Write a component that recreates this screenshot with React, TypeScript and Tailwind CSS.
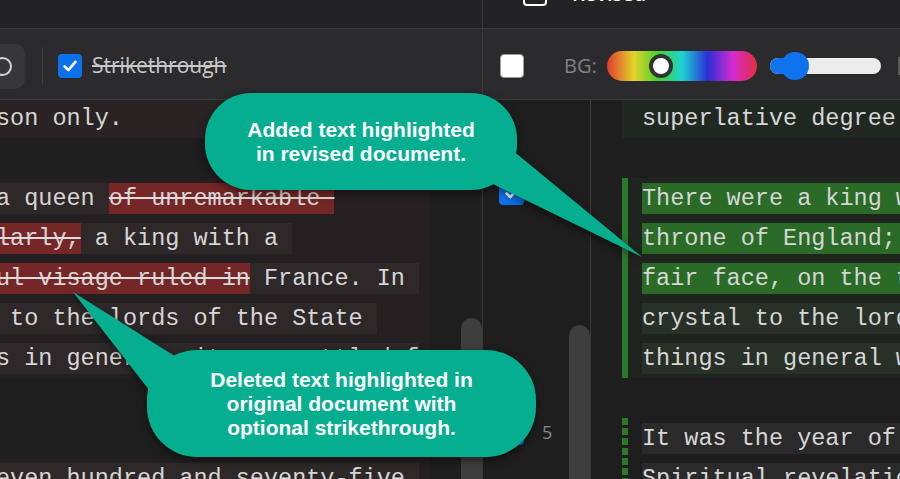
import React from "react";

type Seg = { t: string; c?: string };

const mono = "font-['Liberation_Mono',monospace] text-[23.5px] text-[#d6d6d6]";
const ui = "font-['Open_Sans','Noto_Sans',sans-serif]";

const del = "bg-[#752626] line-through decoration-[#dcdcdc] decoration-2";
const plain = "bg-[#2e2829]";

// left (original) rows
const leftRows: { bg: string; segs: Seg[] }[] = [
  { bg: "bg-[#2a2324]", segs: [{ t: "son only." }] },
  { bg: "", segs: [] },
  { bg: "bg-[#241f20]", segs: [{ t: "a queen ", c: plain }, { t: "of unremarkable ", c: del }] },
  { bg: "bg-[#241f20]", segs: [{ t: "larly,", c: del }, { t: " a king with a ", c: plain }] },
  { bg: "bg-[#241f20]", segs: [{ t: "ul visage ruled in", c: del }, { t: " France. In ", c: plain }] },
  { bg: "bg-[#241f20]", segs: [{ t: " to the lords of the State ", c: plain }] },
  { bg: "bg-[#241f20]", segs: [{ t: "s in general, it was settled f", c: plain }] },
  { bg: "", segs: [] },
  { bg: "", segs: [] },
  { bg: "bg-[#241f20]", segs: [{ t: "even hundred and seventy-five ", c: plain }] },
];

const add = "bg-[#296b27]";
const soft = "bg-[#283028]";
const gray = "bg-[#2a2a2a]";
const solidBar = "bg-[#2b7a2b]";
const dashBar =
  "bg-[repeating-linear-gradient(to_bottom,#2b7a2b_0px,#2b7a2b_7px,transparent_7px,transparent_10px)]";

// right (revised) rows
const rightRows: { bar: string; para: string; segs: Seg[] }[] = [
  { bar: "", para: "bg-[#212821]", segs: [{ t: "superlative degree of comparison only." }] },
  { bar: "", para: "", segs: [] },
  { bar: solidBar, para: "bg-[#1f241f]", segs: [{ t: "There were a king with a large jaw", c: add }] },
  { bar: solidBar, para: "bg-[#1f241f]", segs: [{ t: "throne of England; there were a king", c: add }] },
  { bar: solidBar, para: "bg-[#1f241f]", segs: [{ t: "fair face, on the throne of France.", c: add }] },
  { bar: solidBar, para: "bg-[#1f241f]", segs: [{ t: "crystal to the lords of the State", c: soft }] },
  { bar: solidBar, para: "bg-[#1f241f]", segs: [{ t: "things in general were settled for", c: soft }] },
  { bar: "", para: "", segs: [] },
  { bar: dashBar, para: "", segs: [{ t: "It was the year of Our Lord one", c: gray }] },
  { bar: dashBar, para: "", segs: [{ t: "Spiritual revelations were conceded", c: gray }] },
];

function Check({ size = 24 }: { size?: number }) {
  return (
    <svg width={size} height={size} viewBox="0 0 24 24">
      <polyline points="5.5,12.5 10,17 18.5,7" fill="none" stroke="white" strokeWidth="3.2" strokeLinecap="round" strokeLinejoin="round" />
    </svg>
  );
}

function LeftPane() {
  return (
    <div className="w-[483px] shrink-0 flex flex-col border-r border-[#3a3a3e]">
      <div className="h-[29px] bg-[#232325] border-b border-[#3b3b3f]" />
      <div className="h-[71px] pt-[4px] bg-[#2b2b2e] border-b border-[#3b3b3f] flex items-center overflow-hidden">
        <div className="-ml-[20px] w-[45px] h-[45px] shrink-0 rounded-[10px] bg-[#37373a] flex items-center justify-center">
          <div className="w-[19px] h-[19px] rounded-full border-2 border-[#cfcfcf]" />
        </div>
        <div className="ml-[17px] w-px h-[38px] bg-[#3e3e42]" />
        <div className="ml-[15px] w-[24px] h-[24px] rounded-[4px] bg-[#0c72ec] flex items-center justify-center">
          <Check size={20} />
        </div>
        <span className={`${ui} ml-[10px] text-[21px] text-[#c8c8c8] line-through decoration-[#c8c8c8]`}>
          Strikethrough
        </span>
      </div>
      <div className="flex-1 flex min-h-0">
        <div className={`w-[430px] overflow-hidden ${mono}`}>
          <div className="-mt-[2px]">
            {leftRows.map((r, i) => (
              <div key={i} className={`h-[40px] flex items-center whitespace-pre ${r.bg}`}>
                <div className="-ml-[4px] flex items-center leading-[31px]">
                  {r.segs.map((s, j) => (
                    <span key={j} className={`h-[31px] ${s.c ?? ""}`}>
                      {s.t}
                    </span>
                  ))}
                </div>
              </div>
            ))}
          </div>
        </div>
        <div className="w-[31px] bg-[#1e1e1e]" />
        <div className="w-[21px] bg-[#1e1e1e] flex flex-col">
          <div className="mt-[218px] flex-1 rounded-t-full bg-[#3e3e3e]" />
        </div>
      </div>
    </div>
  );
}

function RightPane() {
  return (
    <div className="flex-1 min-w-0 flex flex-col">
      <div className="h-[29px] bg-[#232325] border-b border-[#3b3b3f] overflow-hidden">
        <div className="-mt-[18px] h-[24px] flex items-center">
          <div className="ml-[40px] w-[24px] h-[24px] rounded-[4px] border-2 border-white" />
          <span className={`${ui} ml-[25px] text-[20px] font-semibold text-white`}>Revised</span>
        </div>
      </div>
      <div className="h-[71px] pt-[4px] bg-[#2b2b2e] border-b border-[#3b3b3f] flex items-center overflow-hidden">
        <div className="ml-[17px] w-[24px] h-[24px] shrink-0 rounded-[4px] bg-white border border-[#9a9a9a]" />
        <div className="ml-[23px] w-px h-[38px] bg-[#3e3e42]" />
        <span className={`${ui} ml-[17px] text-[20px] text-[#808080]`}>BG:</span>
        <div className="ml-[10px] relative w-[150px] h-[30px] shrink-0 rounded-full bg-[linear-gradient(to_right,#e03a2e,#e3d52c_18%,#46d12c_34%,#1fd4d0_50%,#2a2fd6_67%,#d62ad2_84%,#e0303a)]">
          <div className="absolute left-[42px] top-[3px] w-[24px] h-[24px] rounded-full bg-white border-[4px] border-[#333333]" />
        </div>
        <div className="ml-[13px] relative w-[111px] h-[16px] shrink-0 rounded-full bg-[#ececec]">
          <div className="absolute left-0 top-0 h-[16px] w-[30px] rounded-l-full bg-[#0f72ee]" />
          <div className="absolute left-[11px] -top-[6px] w-[28px] h-[28px] rounded-full bg-[#0f72ee]" />
        </div>
        <div className="ml-[17px] w-[8px] h-[18px] shrink-0 bg-[#5a5a5a]" />
      </div>
      <div className="flex-1 flex min-h-0">
        <div className="w-[108px] shrink-0 border-r border-[#3a3a3e] bg-[#1e1e1e] flex">
          <div className="w-[87px] flex flex-col">
            <div className="mt-[80px] ml-[16px] w-[25px] h-[25px] rounded-[4px] bg-[#0c72ec] flex items-center justify-center">
              <Check size={20} />
            </div>
            <div className="mt-[214px] ml-[16px] flex items-center">
              <div className="w-[25px] h-[25px] rounded-[4px] bg-[#0c72ec] flex items-center justify-center">
                <Check size={20} />
              </div>
              <span className={`${ui} ml-[18px] text-[18px] text-[#8a8a8a]`}>5</span>
            </div>
          </div>
          <div className="w-[21px] flex flex-col">
            <div className="mt-[225px] flex-1 rounded-t-full bg-[#3e3e3e]" />
          </div>
        </div>
        <div className={`flex-1 min-w-0 overflow-hidden bg-[#1e1e1e] ${mono}`}>
          <div className="-mt-[2px]">
            {rightRows.map((r, i) => (
              <div key={i} className="h-[40px] flex">
                <div className="w-[31px] shrink-0" />
                <div className={`flex flex-1 min-w-0 ${r.para}`}>
                  <div className={`w-[6px] shrink-0 ${r.bar}`} />
                  <div className="pl-[14px] flex items-center whitespace-pre leading-[31px]">
                    {r.segs.map((s, j) => (
                      <span key={j} className={`h-[31px] ${s.c ?? ""}`}>
                        {s.t}
                      </span>
                    ))}
                  </div>
                </div>
              </div>
            ))}
          </div>
        </div>
      </div>
    </div>
  );
}

function Callouts() {
  const txt = "font-['Liberation_Sans',Arial,sans-serif] font-bold text-[21px] leading-[24px] text-white text-center";
  return (
    <div className="absolute inset-0 pointer-events-none">
      <svg width="900" height="479" viewBox="0 0 900 479" className="absolute inset-0 drop-shadow-[0_3px_4px_rgba(0,0,0,0.5)]">
        <rect x="205" y="93" width="312" height="97" rx="46" fill="#04ae8f" />
        <polygon points="450,163 500,140 642,257" fill="#04ae8f" />
        <rect x="147" y="350" width="389" height="107" rx="50" fill="#04ae8f" />
        <polygon points="73,292 200,372 160,404" fill="#04ae8f" />
      </svg>
      <div className={`absolute left-[205px] top-[93px] w-[312px] h-[97px] flex items-center justify-center ${txt}`}>
        <p>
          Added text highlighted
          <br />
          in revised document.
        </p>
      </div>
      <div className={`absolute left-[147px] top-[350px] w-[389px] h-[107px] flex items-center justify-center ${txt}`}>
        <p>
          Deleted text highlighted in
          <br />
          original document with
          <br />
          optional strikethrough.
        </p>
      </div>
    </div>
  );
}

export default function App() {
  return (
    <div className="relative w-[900px] h-[479px] overflow-hidden bg-[#1e1e1e] flex">
      <LeftPane />
      <RightPane />
      <Callouts />
    </div>
  );
}
